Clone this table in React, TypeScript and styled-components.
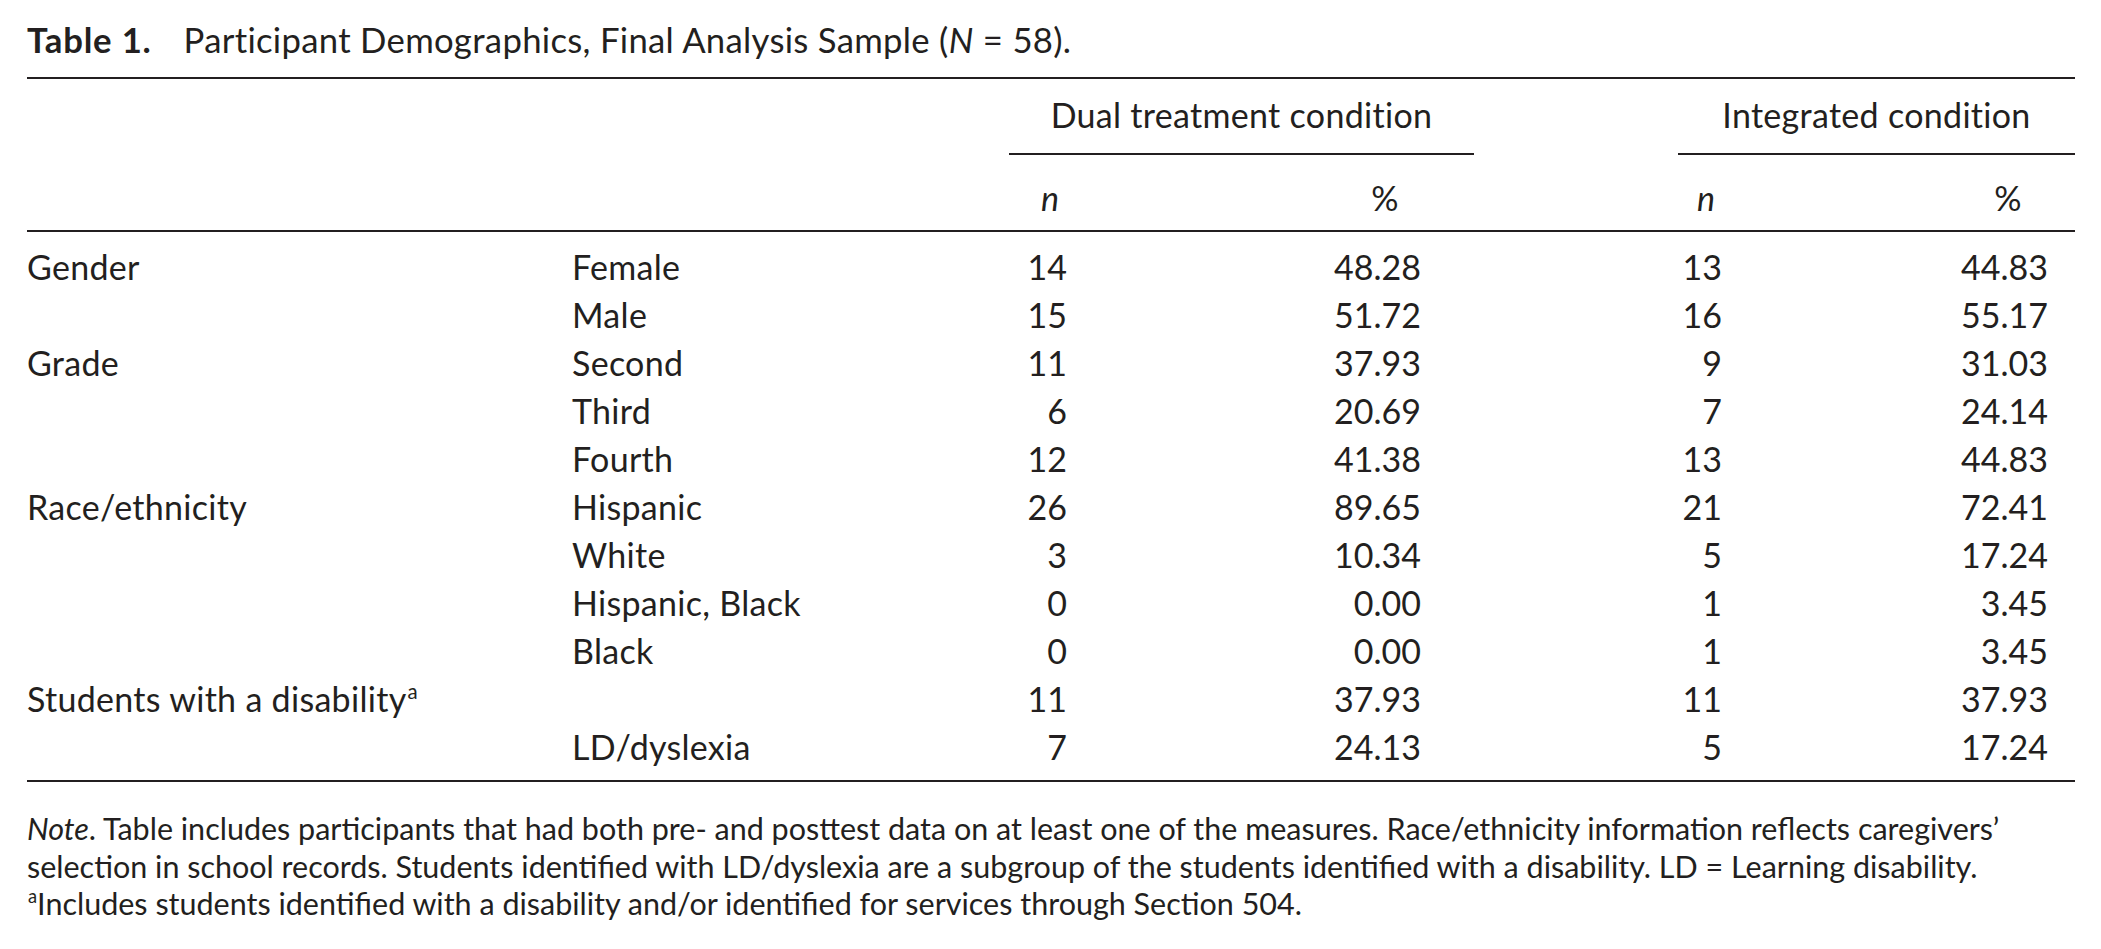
import React from 'react';
import styled, { createGlobalStyle } from 'styled-components';

const GlobalStyles = createGlobalStyle`
  html, body {
    margin: 0;
    padding: 0;
    background: #ffffff;
  }

  body {
    font-family: Lato, 'Open Sans', sans-serif;
    color: #231f20;
  }
`;

// stub, sub-label, dual n, dual %, gap, integrated n, integrated %
const COLUMNS = '545px 437px 82px 383px 204px 58px 339px';

type DataRow = {
  group?: string;
  note?: boolean;
  sub?: string;
  dualN: string;
  dualPct: string;
  intN: string;
  intPct: string;
};

const rows: DataRow[] = [
  { group: 'Gender', sub: 'Female', dualN: '14', dualPct: '48.28', intN: '13', intPct: '44.83' },
  { sub: 'Male', dualN: '15', dualPct: '51.72', intN: '16', intPct: '55.17' },
  { group: 'Grade', sub: 'Second', dualN: '11', dualPct: '37.93', intN: '9', intPct: '31.03' },
  { sub: 'Third', dualN: '6', dualPct: '20.69', intN: '7', intPct: '24.14' },
  { sub: 'Fourth', dualN: '12', dualPct: '41.38', intN: '13', intPct: '44.83' },
  { group: 'Race/ethnicity', sub: 'Hispanic', dualN: '26', dualPct: '89.65', intN: '21', intPct: '72.41' },
  { sub: 'White', dualN: '3', dualPct: '10.34', intN: '5', intPct: '17.24' },
  { sub: 'Hispanic, Black', dualN: '0', dualPct: '0.00', intN: '1', intPct: '3.45' },
  { sub: 'Black', dualN: '0', dualPct: '0.00', intN: '1', intPct: '3.45' },
  { group: 'Students with a disability', note: true, dualN: '11', dualPct: '37.93', intN: '11', intPct: '37.93' },
  { sub: 'LD/dyslexia', dualN: '7', dualPct: '24.13', intN: '5', intPct: '17.24' },
];

const Page = styled.div`
  padding: 0 26px 0 27px;
`;

const Title = styled.h1`
  margin: 16px 0 13px;
  font-size: 34.7px;
  font-weight: 400;
  line-height: 48px;
  letter-spacing: 0.3px;
  white-space: nowrap;

  b {
    font-weight: 700;
    margin-right: 32px;
    letter-spacing: 0.8px;
  }
`;

const Table = styled.div`
  border-top: 2px solid #231f20;
  border-bottom: 2px solid #231f20;
  font-size: 34px;
  line-height: 48px;
  letter-spacing: 0.3px;
`;

const GridRow = styled.div`
  display: grid;
  grid-template-columns: ${COLUMNS};
`;

const SpannerRow = styled(GridRow)`
  padding-top: 12px;
`;

const Spanner = styled.div<{ $col: string }>`
  grid-column: ${(p) => p.$col};
  text-align: center;
  padding-bottom: 14px;
  border-bottom: 2px solid #231f20;
  white-space: nowrap;
`;

const SubHeadRow = styled(GridRow)`
  padding: 19px 0 8px;
  border-bottom: 2px solid #231f20;
`;

const Body = styled.div`
  padding: 11px 0 9px;
`;

const Cell = styled.div`
  white-space: nowrap;
`;

const NumCell = styled.div<{ $col: number; $pad: number }>`
  grid-column: ${(p) => p.$col};
  display: flex;
  justify-content: flex-end;
  padding-right: ${(p) => p.$pad}px;
`;

const Figure = styled.span<{ $width: number; $head?: boolean }>`
  display: inline-block;
  width: ${(p) => p.$width}px;
  text-align: ${(p) => (p.$head ? 'center' : 'right')};
  font-variant-numeric: tabular-nums;
  letter-spacing: 0;
`;

const Sup = styled.sup`
  font-size: 0.6em;
  line-height: 0;
  vertical-align: 0.65em;
  margin-left: 1px;
`;

const Note = styled.div`
  margin-top: 28px;
  font-size: 30.5px;
  line-height: 37.5px;

  div {
    white-space: nowrap;
  }
`;

// padding-right, figure width and header width for each numeric column
const numCols = [
  { col: 3, pad: 24, width: 42, headWidth: 34 },
  { col: 4, pad: 53, width: 96, headWidth: 72 },
  { col: 6, pad: 14, width: 42, headWidth: 32 },
  { col: 7, pad: 27, width: 96, headWidth: 80 },
];

const App = () => (
  <Page>
    <GlobalStyles />
    <Title>
      <b>Table 1.</b>Participant Demographics, Final Analysis Sample (<i>N</i> = 58).
    </Title>
    <Table>
      <SpannerRow>
        <Spanner $col="3 / 5">Dual treatment condition</Spanner>
        <Spanner $col="6 / 8">Integrated condition</Spanner>
      </SpannerRow>
      <SubHeadRow>
        {numCols.map((c, i) => (
          <NumCell key={c.col} $col={c.col} $pad={c.pad}>
            <Figure $width={c.headWidth} $head>
              {i % 2 === 0 ? <i>n</i> : '%'}
            </Figure>
          </NumCell>
        ))}
      </SubHeadRow>
      <Body>
        {rows.map((r, i) => {
          const values = [r.dualN, r.dualPct, r.intN, r.intPct];
          return (
            <GridRow key={i}>
              <Cell>
                {r.group}
                {r.note && <Sup>a</Sup>}
              </Cell>
              <Cell>{r.sub}</Cell>
              {numCols.map((c, j) => (
                <NumCell key={c.col} $col={c.col} $pad={c.pad}>
                  <Figure $width={c.width}>{values[j]}</Figure>
                </NumCell>
              ))}
            </GridRow>
          );
        })}
      </Body>
    </Table>
    <Note>
      <div>
        <i>Note</i>. Table includes participants that had both pre- and posttest data on at least one of the
        measures. Race/ethnicity information reflects caregivers’
      </div>
      <div>
        selection in school records. Students identified with LD/dyslexia are a subgroup of the students
        identified with a disability. LD = Learning disability.
      </div>
      <div>
        <Sup>a</Sup>Includes students identified with a disability and/or identified for services through
        Section 504.
      </div>
    </Note>
  </Page>
);

export default App;
